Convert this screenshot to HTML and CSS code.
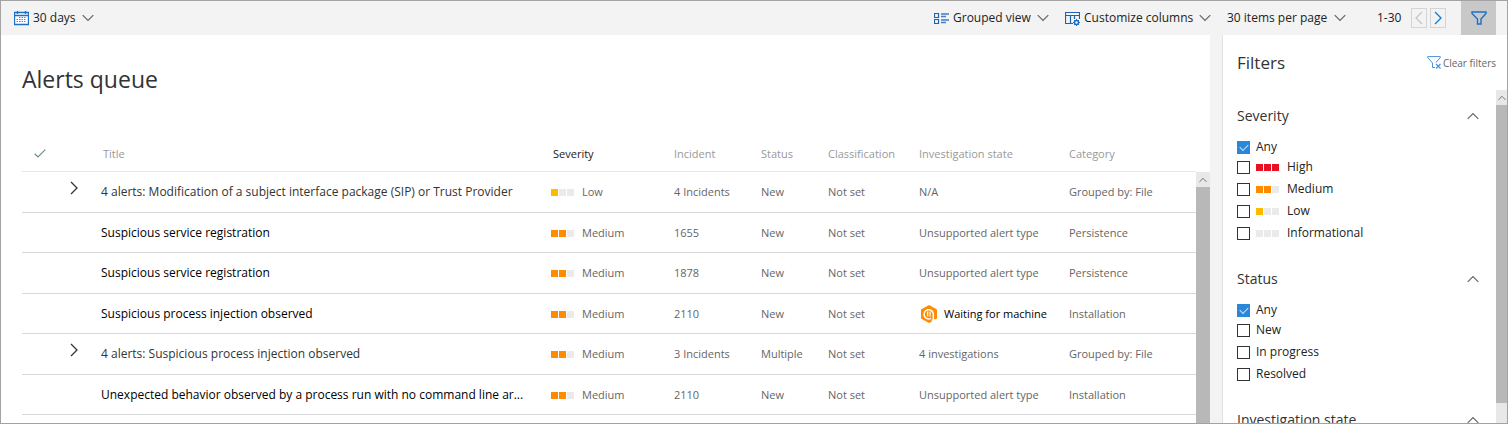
FILE: index.html
```html
<!DOCTYPE html>
<html lang="en">
<head>
<meta charset="utf-8">
<title>Alerts queue</title>
<link rel="stylesheet" href="styles.css">
</head>
<body>
<svg class="defs" aria-hidden="true">
  <symbol id="down" viewBox="0 0 12 8"><path d="M.7 1.200 6 6.500l5.300-5.300" fill="none" stroke="currentColor" stroke-width="1.200"/></symbol>
  <symbol id="up" viewBox="0 0 12 8"><path d="M.7 6.800 6 1.500l5.300 5.300" fill="none" stroke="currentColor" stroke-width="1.200"/></symbol>
  <symbol id="right" viewBox="0 0 8 14"><path d="M1 1l6 6-6 6" fill="none" stroke="currentColor" stroke-width="1.300"/></symbol>
  <symbol id="left" viewBox="0 0 8 14"><path d="M7 1 1 7l6 6" fill="none" stroke="currentColor" stroke-width="1.200"/></symbol>
  <symbol id="funnel" viewBox="0 0 16 14"><path d="M1 1h14v1.500L10 8v5H6.500V8L1 2.500z" fill="none" stroke="currentColor" stroke-width="1.400"/></symbol>
</svg>
<div class="app">
  <header class="toolbar">
    <label class="tool tool-range">
      <svg class="tool-icon" viewBox="0 0 15 15"><path d="M.5 1.500h14v12H.5zM.5 4.500h14M3.500 0v3M11.500 0v3" fill="#fff" stroke="#1a6fc9" stroke-width="1.300"/><path d="M5 6.500h1.500M7.500 6.500H9M10 6.500h1.500M2.500 8.500H4M5 8.500h1.500M7.500 8.500H9M10 8.500h1.500M2.500 10.500H4M5 10.500h1.500M7.500 10.500H9M10 10.500h1.500" stroke="#5b86c4"/></svg>
      <select class="tool-select" aria-label="Time range"><option>30 days</option></select>
      <svg class="caret"><use href="#down"/></svg>
    </label>
    <button class="tool tool-view" type="button">
      <svg class="tool-icon" viewBox="0 0 15 15"><path d="M.5 2.500h4v4h-4zM.5 8.500h4v4h-4z" fill="none" stroke="#1f63ad" stroke-width="1.200"/><path d="M7 3h8M7 5.500h5M7 9h8M7 11.500h5" stroke="#3f7fcc" stroke-width="1.500"/></svg>
      <span>Grouped view</span>
      <svg class="caret"><use href="#down"/></svg>
    </button>
    <button class="tool tool-columns" type="button">
      <svg class="tool-icon" viewBox="0 0 15 15"><path d="M8 12.500H.5v-11h14V8M.5 4.500h14M5.500 4.500v8M9.500 4.500V8" fill="none" stroke="#1f63ad" stroke-width="1.200"/><circle cx="11.500" cy="11.500" r="2" fill="none" stroke="#1a6fc9" stroke-width="1.400"/><path d="M11.500 8v1.500M11.500 13.500V15M8 11.500h1.500M13.500 11.500H15M9 9l1 1M13 13l1 1M14 9l-1 1M10 13l-1 1" stroke="#1a6fc9"/></svg>
      <span>Customize columns</span>
      <svg class="caret"><use href="#down"/></svg>
    </button>
    <label class="tool tool-size">
      <select class="tool-select" aria-label="Page size"><option>30 items per page</option></select>
      <svg class="caret"><use href="#down"/></svg>
    </label>
    <span class="range">1-30</span>
    <button class="page-btn page-prev" type="button" aria-label="Previous page" disabled><svg class="arrow"><use href="#left"/></svg></button>
    <button class="page-btn" type="button" aria-label="Next page"><svg class="arrow"><use href="#right"/></svg></button>
    <button class="filter-btn" type="button" aria-label="Filters"><svg class="funnel"><use href="#funnel"/></svg></button>
  </header>

  <div class="body">
    <main class="main">
      <h1 class="title">Alerts queue</h1>
      <div class="grid">
        <table class="alerts">
          <colgroup>
            <col class="c-check"><col class="c-expand"><col><col class="c-severity"><col class="c-incident"><col class="c-status"><col class="c-class"><col class="c-state"><col class="c-category">
          </colgroup>
          <thead>
            <tr>
              <th class="check-head"><svg class="check" viewBox="0 0 12 9"><path d="M.7 4.800 4 8l7.300-7.300" fill="none" stroke="#6f8f8c" stroke-width="1.200"/></svg></th>
              <th></th><th class="inset">Title</th><th class="inset sorted">Severity</th><th>Incident</th><th>Status</th><th>Classification</th><th>Investigation state</th><th>Category</th>
            </tr>
          </thead>
          <tbody>
            <tr class="group">
              <td></td><td class="expand"><button class="expander" type="button" aria-label="Expand"><svg class="arrow"><use href="#right"/></svg></button></td>
              <td class="name">4 alerts: Modification of a subject interface package (SIP) or Trust Provider</td>
              <td><span class="sev low"><i></i><i></i><i></i></span>Low</td><td>4 Incidents</td><td>New</td><td>Not set</td><td>N/A</td><td>Grouped by: File</td>
            </tr>
            <tr>
              <td></td><td></td><td class="name">Suspicious service registration</td>
              <td><span class="sev medium"><i></i><i></i><i></i></span>Medium</td><td>1655</td><td>New</td><td>Not set</td><td>Unsupported alert type</td><td>Persistence</td>
            </tr>
            <tr>
              <td></td><td></td><td class="name">Suspicious service registration</td>
              <td><span class="sev medium"><i></i><i></i><i></i></span>Medium</td><td>1878</td><td>New</td><td>Not set</td><td>Unsupported alert type</td><td>Persistence</td>
            </tr>
            <tr>
              <td></td><td></td><td class="name">Suspicious process injection observed</td>
              <td><span class="sev medium"><i></i><i></i><i></i></span>Medium</td><td>2110</td><td>New</td><td>Not set</td>
              <td><span class="waiting"><svg class="hex" viewBox="0 0 16 18"><path d="M8 0l8 4.500v9l-2 1-1.500-1-2 1.500.5 1.500L8 18l-8-4.500v-9z" fill="#ff8c00"/><path d="M10 13.300A4.600 4.600 0 1 1 12.300 9v5" fill="none" stroke="#fff" stroke-width="1.500"/><path d="M6.700 6.500v5M9.100 6.500v5" stroke="#fff" stroke-width="1.200"/></svg>Waiting for machine</span></td><td>Installation</td>
            </tr>
            <tr class="group">
              <td></td><td class="expand"><button class="expander" type="button" aria-label="Expand"><svg class="arrow"><use href="#right"/></svg></button></td>
              <td class="name">4 alerts: Suspicious process injection observed</td>
              <td><span class="sev medium"><i></i><i></i><i></i></span>Medium</td><td>3 Incidents</td><td>Multiple</td><td>Not set</td><td>4 investigations</td><td>Grouped by: File</td>
            </tr>
            <tr>
              <td></td><td></td><td class="name">Unexpected behavior observed by a process run with no command line ar...</td>
              <td><span class="sev medium"><i></i><i></i><i></i></span>Medium</td><td>2110</td><td>New</td><td>Not set</td><td>Unsupported alert type</td><td>Installation</td>
            </tr>
          </tbody>
        </table>
        <div class="scroll scroll-grid"><span class="scroll-up"><svg class="scroll-arrow"><use href="#up"/></svg></span><span class="thumb"></span></div>
      </div>
    </main>

    <aside class="panel">
      <div class="panel-head">
        <h2 class="panel-title">Filters</h2>
        <button class="clear" type="button"><svg class="clear-icon" viewBox="0 0 14 13"><path d="M8 11.500H5.500V7L.7 1.500V.6h12.600v.9L9 6.500" fill="none" stroke="#4a90dc"/><path d="M9 8l4.500 4.500M13.500 8 9 12.500" stroke="#4a90dc" stroke-width="1.200"/></svg>Clear filters</button>
      </div>
      <div class="panel-body">
        <div class="filters">
          <section class="section">
            <button class="section-head" type="button">Severity<svg class="caret"><use href="#up"/></svg></button>
            <label class="opt any"><input class="box" type="checkbox" checked>Any</label>
            <label class="opt"><input class="box" type="checkbox"><span class="sev high"><i></i><i></i><i></i></span>High</label>
            <label class="opt"><input class="box" type="checkbox"><span class="sev medium"><i></i><i></i><i></i></span>Medium</label>
            <label class="opt"><input class="box" type="checkbox"><span class="sev low"><i></i><i></i><i></i></span>Low</label>
            <label class="opt"><input class="box" type="checkbox"><span class="sev"><i></i><i></i><i></i></span>Informational</label>
          </section>
          <section class="section">
            <button class="section-head" type="button">Status<svg class="caret"><use href="#up"/></svg></button>
            <label class="opt any"><input class="box" type="checkbox" checked>Any</label>
            <label class="opt"><input class="box" type="checkbox">New</label>
            <label class="opt"><input class="box" type="checkbox">In progress</label>
            <label class="opt"><input class="box" type="checkbox">Resolved</label>
          </section>
          <section class="section">
            <button class="section-head" type="button">Investigation state<svg class="caret"><use href="#up"/></svg></button>
          </section>
        </div>
        <div class="scroll scroll-panel"><span class="scroll-up"><svg class="scroll-arrow"><use href="#up"/></svg></span><span class="thumb"></span></div>
      </div>
    </aside>
  </div>
</div>
</body>
</html>
```
FILE: styles.css
```css
* { box-sizing: border-box; }
body { margin: 0; font: 12px/16px "Open Sans", "Noto Sans", sans-serif; color: #333; background: #fff; }
button, select { font: inherit; color: inherit; background: none; border: 0; padding: 0; margin: 0; }
svg { display: block; flex: none; }
.defs { display: none; }

.app { display: flex; flex-direction: column; height: 100vh; border: 1px solid #a3a3a3; overflow: hidden; }

.toolbar { flex: none; display: flex; align-items: center; height: 34px; padding: 0 11px 0 13px; background: #f3f3f3; color: #222; }
.tool { display: flex; align-items: center; flex: none; white-space: nowrap; }
.tool-range { margin-right: auto; }
.tool-view { width: 131px; }
.tool-columns { width: 162px; }
.tool-size { width: 150px; }
.tool-select { appearance: none; }
.tool-icon { width: 15px; height: 15px; margin-right: 4px; }
.caret { width: 12px; height: 8px; margin-left: 6px; color: #666; }
.range { width: 34px; }
.page-btn { display: flex; align-items: center; justify-content: center; width: 16px; height: 20px; margin-right: 3px; border: 1px solid #d4d4d4; color: #0f78d4; }
.page-prev { color: #c4c4c4; }
.arrow { width: 8px; height: 14px; }
.filter-btn { display: flex; align-items: center; justify-content: center; width: 35px; height: 34px; margin-left: 12px; background: #c8c8c8; color: #1a6fc9; }
.funnel { width: 16px; height: 14px; }

.body { flex: 1; min-height: 0; display: flex; background: #f3f3f3; }
.main { flex: 1; min-width: 0; display: flex; flex-direction: column; margin-right: 12px; padding: 27px 0 0 21px; background: #fff; }
.title { margin: 0 0 40px; font-size: 23px; line-height: 34px; font-weight: 400; }
.grid { flex: 1; min-height: 0; display: flex; align-items: stretch; overflow: hidden; }
.alerts { flex: 1; align-self: flex-start; min-width: 0; table-layout: fixed; border-collapse: separate; border-spacing: 0; font-size: 11px; color: #666; }
.c-check { width: 48px; }
.c-expand { width: 31px; }
.c-severity { width: 123px; }
.c-incident { width: 87px; }
.c-status { width: 67px; }
.c-class { width: 91px; }
.c-state { width: 150px; }
.c-category { width: 127px; }
th { height: 36px; padding: 0; border-bottom: 1px solid #e6e6e6; text-align: left; font-weight: 400; color: #999; white-space: nowrap; }
td { height: 40px; padding: 0; border-bottom: 1px solid #d8d8d8; white-space: nowrap; }
tr:nth-child(odd) td { height: 41px; }
.inset { padding-left: 2px; }
.sorted { color: #222; }
.check-head { padding-left: 12px; }
.check { width: 12px; height: 9px; }
.name { font-size: 12px; color: #000; overflow: hidden; text-overflow: ellipsis; }
.group .name { color: #333; }
.expand { vertical-align: top; padding-top: 9px; }
.expander { display: block; color: #333; }
.waiting { display: flex; align-items: center; gap: 7px; color: #000; }
.hex { width: 16px; height: 18px; margin-left: 2px; }

.sev { display: inline-flex; gap: 1px; margin-right: 8px; }
.sev i { width: 7px; height: 7px; background: #eaeaea; }
.low i:first-child { background: #ffb900; }
.medium i:nth-child(-n+2) { background: #ff8c00; }
.high i { background: #e81123; }

.scroll { flex: none; display: flex; flex-direction: column; background: #e8e8e8; }
.scroll-grid { width: 14px; margin-top: 36px; }
.scroll-panel { width: 11px; padding-bottom: 20px; }
.scroll-up { flex: none; display: flex; align-items: center; justify-content: center; height: 15px; color: #555; }
.scroll-arrow { width: 8px; height: 6px; }
.thumb { flex: 1; background: #b8b8b8; }

.panel { flex: none; display: flex; flex-direction: column; width: 285px; border-left: 1px solid #e2e2e2; background: #fff; }
.panel-head { flex: none; display: flex; align-items: center; justify-content: space-between; height: 55px; padding: 0 11px 0 14px; }
.panel-title { margin: 0; font-size: 17px; line-height: 24px; font-weight: 400; }
.clear { display: flex; align-items: center; gap: 2px; font-size: 10px; color: #666; }
.clear-icon { width: 14px; height: 13px; }
.panel-body { flex: 1; min-height: 0; display: flex; }
.filters { flex: 1; padding: 14px 17px 0 14px; overflow: hidden; }
.section { margin-bottom: 23px; }
.section-head { display: flex; align-items: center; justify-content: space-between; width: 100%; margin-bottom: 10px; font-size: 14px; line-height: 24px; }
.opt { display: flex; align-items: center; height: 22px; color: #222; }
.any { height: 18px; }
.box { appearance: none; flex: none; width: 13px; height: 13px; margin: 0 6px 0 0; border: 1px solid #333; background: #fff; }
.box:checked { border-color: #2b88d8; background: #2b88d8; }
.box:checked::before { content: ""; display: block; width: 7px; height: 4px; margin: 2px 0 0 2px; border: solid #cfe6fa; border-width: 0 0 1px 1px; transform: rotate(-45deg); }
```
